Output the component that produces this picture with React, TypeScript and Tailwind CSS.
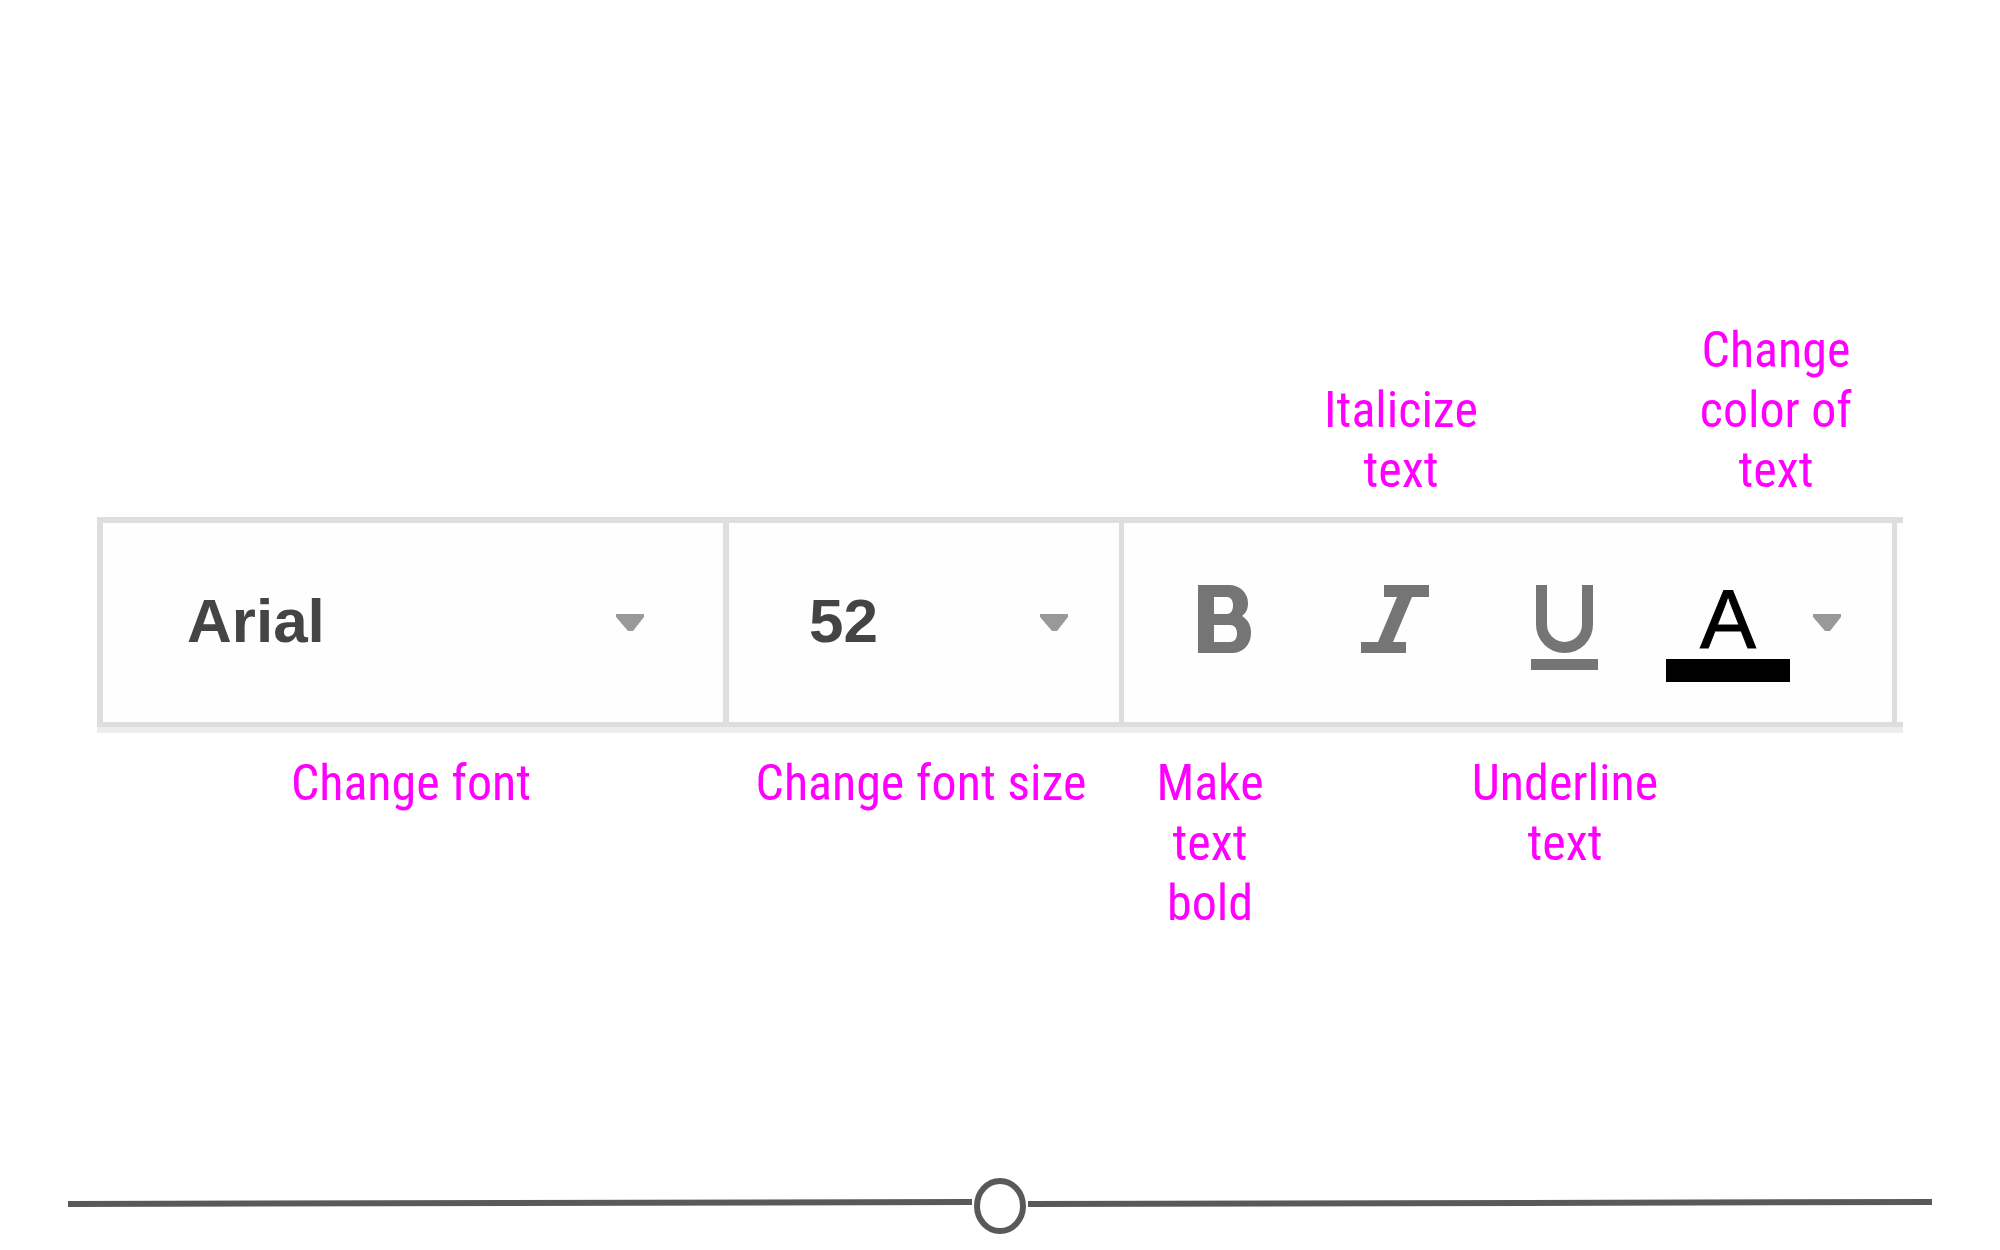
import type { ReactNode } from "react";

function Caret({ className = "" }: { className?: string }) {
  return (
    <svg viewBox="0 0 28 17" className={`h-[17px] w-7 shrink-0 ${className}`} aria-hidden="true">
      <path d="M0 0H28V3L17 17H12L0 3Z" fill="#999" />
    </svg>
  );
}

function Label({ children, narrow = false }: { children: ReactNode; narrow?: boolean }) {
  return <p className={narrow ? "w-[150px]" : "w-[200px]"}>{children}</p>;
}

function Picker({ label, value, options, selectClass, caretClass }: {
  label: string;
  value: string;
  options: string[];
  selectClass: string;
  caretClass: string;
}) {
  return (
    <div className="relative flex items-center border-l-6 border-[#dedede]">
      <select
        aria-label={label}
        defaultValue={value}
        className={`h-full w-full appearance-none bg-transparent pb-1 text-[62px] leading-[72px] font-bold text-[#444] outline-none ${selectClass}`}
      >
        {options.map((o) => (
          <option key={o}>{o}</option>
        ))}
      </select>
      <Caret className={`pointer-events-none absolute ${caretClass}`} />
    </div>
  );
}

function FormatButton({ label, children }: { label: string; children: ReactNode }) {
  return (
    <button type="button" aria-label={label} className="flex items-center justify-center">
      <svg viewBox="0 0 120 120" className="size-[120px]" fill="#757575" aria-hidden="true">
        {children}
      </svg>
    </button>
  );
}

function Rule({ y1, y2 }: { y1: number; y2: number }) {
  return (
    <svg viewBox="0 0 904 60" preserveAspectRatio="none" className="h-[60px] min-w-0 flex-1" aria-hidden="true">
      <line x1="0" y1={y1} x2="904" y2={y2} stroke="#595959" strokeWidth="6" />
    </svg>
  );
}

const labelText =
  "text-center font-['Roboto_Condensed','Liberation_Sans_Narrow',Roboto,sans-serif] text-[50px] leading-[60px] text-[#ff00ff]";

export default function App() {
  return (
    <main className="flex min-h-screen flex-col bg-white pt-80 pb-[13px] font-['Liberation_Sans',Arial,sans-serif]">
      <section className="mx-[97px]">
        <div className={`grid grid-cols-[1204fr_200fr_148fr_254fr] items-end justify-items-center ${labelText}`}>
          <div className="col-start-2">
            <Label>Italicize text</Label>
          </div>
          <div className="col-start-4">
            <Label>Change color of text</Label>
          </div>
        </div>

        <div
          role="toolbar"
          aria-label="Text formatting"
          className="mt-[17px] border-b-6 border-[#ececec]"
        >
          <div className="grid h-[210px] grid-cols-[626fr_396fr_778fr_6fr] border-t-6 border-b-5 border-[#dedede] bg-[#fefefe]">
            <Picker
              label="Font"
              value="Arial"
              options={["Arial", "Georgia", "Verdana"]}
              selectClass="pl-[84px]"
              caretClass="right-[79px]"
            />
            <Picker
              label="Font size"
              value="52"
              options={["36", "48", "52", "60"]}
              selectClass="pl-[80px]"
              caretClass="right-[51px]"
            />
            <div className="grid grid-cols-[170fr_170fr_170fr_242fr] border-x-5 border-[#dedede] pl-4">
              <FormatButton label="Bold">
                <path
                  fillRule="evenodd"
                  d="M33 22H64C75 22 83 30 83 40C83 46 81 50 77 53C83 57 86 62 86 70C86 82 78 90 67 90H33Z M49 34V51H62C66 51 68 47 68 42.5S66 34 62 34Z M49 62V79H65C70 79 72 75 72 70.5S70 62 65 62Z"
                />
              </FormatButton>
              <FormatButton label="Italic">
                <path d="M49 22H94V34H77L58 79H71V90H26V79H43L62 34H49Z" />
              </FormatButton>
              <FormatButton label="Underline">
                <path d="M36.5 22V61.5A23 23 0 0 0 82.5 61.5V22" fill="none" stroke="#757575" strokeWidth="11" />
                <rect x="26" y="96" width="67" height="11" />
              </FormatButton>
              <button type="button" aria-label="Text color" className="flex items-center gap-[23px] pl-4">
                <span className="flex w-[124px] flex-col items-center pt-4 text-[84px] leading-20 text-black [-webkit-text-stroke:1px_black]">
                  A
                  <span className="h-[23px] w-full bg-black" />
                </span>
                <Caret />
              </button>
            </div>
          </div>
        </div>

        <div
          className={`mt-5 grid grid-cols-[628fr_392fr_186fr_524fr_76fr] items-start justify-items-center ${labelText}`}
        >
          <p>Change font</p>
          <p>Change font size</p>
          <Label narrow>Make text bold</Label>
          <Label>Underline text</Label>
        </div>
      </section>

      <footer className="mx-[68px] mt-auto flex">
        <Rule y1={27} y2={25} />
        <svg viewBox="0 0 56 60" className="h-[60px] w-14" aria-hidden="true">
          <ellipse cx="28" cy="29" rx="23" ry="25" fill="#fff" stroke="#595959" strokeWidth="6" />
        </svg>
        <Rule y1={27} y2={25} />
      </footer>
    </main>
  );
}
